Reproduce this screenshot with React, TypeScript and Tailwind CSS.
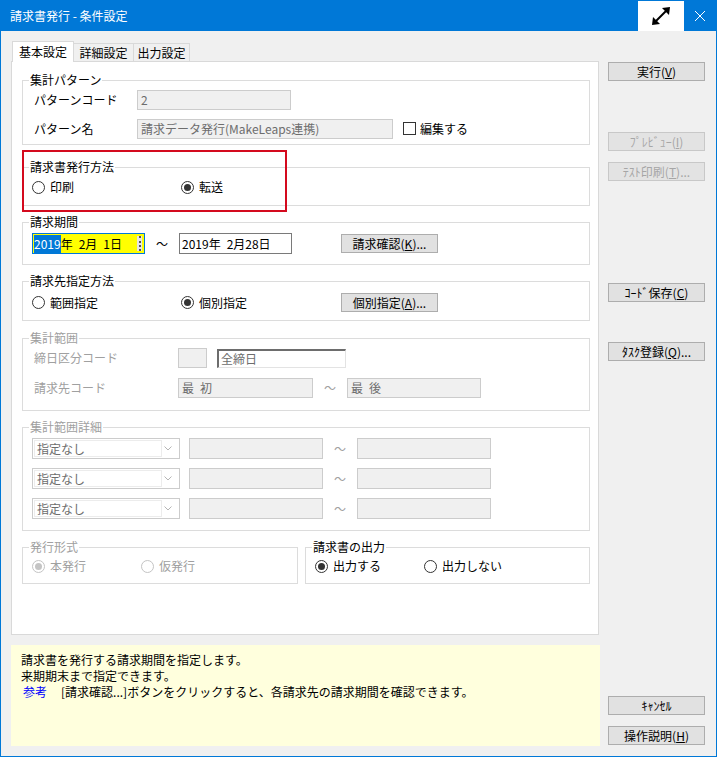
import React from "react";

type BoxProps = { children?: React.ReactNode; className?: string };

function Group({ label, disabled, className = "", children }: BoxProps & { label: string; disabled?: boolean }) {
  return (
    <div className={`relative border border-[#dcdcdc] ${className}`}>
      <span
        className={`absolute left-[6px] top-[-9px] bg-white px-px leading-[16px] ${
          disabled ? "text-[#a0a0a0]" : "text-black"
        }`}
      >
        {label}
      </span>
      {children}
    </div>
  );
}

function Radio({ label, checked, disabled, className = "" }: { label: string; checked?: boolean; disabled?: boolean; className?: string }) {
  return (
    <div className={`flex items-center gap-[5px] h-[16px] ${className}`}>
      <span
        className={`w-[13px] h-[13px] rounded-full border bg-white flex items-center justify-center ${
          disabled ? "border-[#c4c4c4]" : "border-[#333333]"
        }`}
      >
        {checked && <span className={`w-[7px] h-[7px] rounded-full ${disabled ? "bg-[#c4c4c4]" : "bg-[#333333]"}`} />}
      </span>
      <span className={disabled ? "text-[#a0a0a0]" : "text-black"}>{label}</span>
    </div>
  );
}

function Btn({ children, disabled, className = "" }: BoxProps & { disabled?: boolean }) {
  return (
    <button
      className={`h-[19px] w-[97px] border leading-none flex items-center justify-center shrink-0 ${
        disabled ? "bg-[#e3e3e3] border-[#c8c8c8] text-[#a6a6a6]" : "bg-[#e1e1e1] border-[#adadad] text-black"
      } ${className}`}
    >
      {children}
    </button>
  );
}

function GrayField({ className = "", children }: BoxProps) {
  return (
    <div className={`h-[20px] bg-[#f0f0f0] border border-[#cccccc] text-[#6d6d6d] flex items-center pl-[3px] whitespace-pre ${className}`}>
      {children}
    </div>
  );
}

// half-width blank as drawn by the fixed-pitch font of the original
function Sp() {
  return <span className="inline-block w-[6px]" />;
}

function Tilde({ disabled }: { disabled?: boolean }) {
  return <span className={`w-[34px] text-center ${disabled ? "text-[#a0a0a0]" : "text-black"}`}>～</span>;
}

function SelectNone() {
  return (
    <div className="w-[148px] h-[21px] bg-white border border-[#cccccc] flex items-center p-px">
      <div className="w-[128px] h-full border border-[#ececec] flex items-center pl-[2px] text-[#6d6d6d]">指定なし</div>
      <svg className="ml-auto mr-[6px]" width="8" height="5" viewBox="0 0 8 5">
        <polyline points="0.5,0.5 4,4 7.5,0.5" fill="none" stroke="#b5b5b5" strokeWidth="1" />
      </svg>
    </div>
  );
}

export default function App() {
  return (
    <div className="w-[717px] h-[757px] bg-[#f0f0f0] border border-[#0078d7] flex flex-col overflow-hidden text-[12px] text-black font-['Noto_Sans_CJK_JP',sans-serif]">
      {/* title bar */}
      <div className="h-[30px] shrink-0 bg-[#0078d7] flex text-white">
        <div className="flex-1 flex items-center pl-[9px]">請求書発行 - 条件設定</div>
        <div className="w-[46px] bg-white flex items-center justify-center">
          <svg width="24" height="24" viewBox="0 0 24 24">
            <line x1="6" y1="18" x2="18" y2="6" stroke="#000" strokeWidth="2" />
            <polygon points="21,3 13,4 20,11" fill="#000" />
            <polygon points="3,21 4,13 11,20" fill="#000" />
          </svg>
        </div>
        <div className="w-[32px] flex items-center justify-center">
          <svg width="10" height="10" viewBox="0 0 10 10">
            <path d="M0 0 L10 10 M10 0 L0 10" stroke="#fff" strokeWidth="1" />
          </svg>
        </div>
      </div>

      <div className="flex flex-1">
        {/* left column */}
        <div className="w-[599px] pl-[10px] pt-[10px] flex flex-col">
          <div className="h-[20px] flex items-end pl-px">
            <div className="relative z-10 -mb-px h-[21px] w-[62px] bg-white border border-b-0 border-[#d9d9d9] flex items-center justify-center">
              基本設定
            </div>
            <div className="h-[18px] w-[60px] bg-[#f0f0f0] border border-l-0 border-b-0 border-[#d9d9d9] flex items-center justify-center">
              詳細設定
            </div>
            <div className="h-[18px] w-[56px] bg-[#f0f0f0] border border-l-0 border-b-0 border-[#d9d9d9] flex items-center justify-center">
              出力設定
            </div>
          </div>

          <div className="w-[588px] h-[574px] bg-white border border-[#d9d9d9] flex flex-col pl-[10px]">
            {/* 集計パターン */}
            <Group label="集計パターン" className="mt-[18px] w-[568px] h-[65px] pt-[9px] pl-[11px]">
              <div className="flex items-center h-[20px]">
                <span className="w-[103px]">パターンコード</span>
                <GrayField className="w-[154px]">2</GrayField>
              </div>
              <div className="flex items-center h-[19px] mt-[9px]">
                <span className="w-[103px]">パターン名</span>
                <GrayField className="w-[256px] h-[19px]">請求データ発行(MakeLeaps連携)</GrayField>
                <span className="ml-[10px] w-[13px] h-[13px] border border-[#333333] bg-white" />
                <span className="ml-[4px]">編集する</span>
              </div>
            </Group>

            {/* 請求書発行方法 */}
            <Group label="請求書発行方法" className="mt-[22px] w-[568px] h-[39px] pt-[11px] pl-[9px]">
              <div className="flex">
                <Radio label="印刷" className="w-[149px]" />
                <Radio label="転送" checked />
              </div>
              <div className="absolute -left-px -top-[18px] w-[265px] h-[62px] border-2 border-[#d40a1e] pointer-events-none" />
            </Group>

            {/* 請求期間 */}
            <Group label="請求期間" className="mt-[16px] w-[568px] h-[43px] pt-[10px] pl-[9px]">
              <div className="flex items-center h-[21px]">
                <div className="w-[113px] h-[21px] border border-[#0078d7] bg-[#ffff00] flex items-center pl-px whitespace-pre">
                  <span className="bg-[#0078d7] text-white">2019</span>
                  <span>年</span>
                  <Sp />
                  <span>2月</span>
                  <Sp />
                  <span>1日</span>
                  <span className="ml-auto mr-[2px] w-[5px] h-[15px] bg-[#e6e6e6] flex justify-center">
                    <span className="h-full border-l-2 border-dotted border-[#555555]" />
                  </span>
                </div>
                <Tilde />
                <div className="w-[113px] h-[21px] border border-[#7a7a7a] bg-white flex items-center pl-[2px] whitespace-pre">
                  <span>2019年</span>
                  <Sp />
                  <span>2月28日</span>
                </div>
                <Btn className="ml-[49px]">
                  請求確認(<u>K</u>)...
                </Btn>
              </div>
            </Group>

            {/* 請求先指定方法 */}
            <Group label="請求先指定方法" className="mt-[16px] w-[568px] h-[40px] pt-[11px] pl-[9px]">
              <div className="flex items-center h-[19px]">
                <Radio label="範囲指定" className="w-[149px]" />
                <Radio label="個別指定" checked className="w-[160px]" />
                <Btn>
                  個別指定(<u>A</u>)...
                </Btn>
              </div>
            </Group>

            {/* 集計範囲 */}
            <Group label="集計範囲" disabled className="mt-[17px] w-[568px] h-[73px] pt-[9px] pl-[11px]">
              <div className="flex items-center h-[20px] text-[#a0a0a0]">
                <span className="w-[144px]">締日区分コード</span>
                <div className="w-[29px] h-[20px] bg-[#f0f0f0] border border-[#cccccc]" />
                <div className="ml-[10px] w-[129px] h-[19px] bg-white border-t-2 border-l-2 border-r border-b border-t-[#6d6d6d] border-l-[#6d6d6d] border-r-[#e3e3e3] border-b-[#e3e3e3] flex items-center pl-[2px] text-[#6d6d6d]">
                  全締日
                </div>
              </div>
              <div className="flex items-center h-[20px] mt-[10px] text-[#a0a0a0]">
                <span className="w-[144px]">請求先コード</span>
                <GrayField className="w-[135px]">
                  最<Sp />初
                </GrayField>
                <Tilde disabled />
                <GrayField className="w-[134px]">
                  最<Sp />後
                </GrayField>
              </div>
            </Group>

            {/* 集計範囲詳細 */}
            <Group label="集計範囲詳細" disabled className="mt-[16px] w-[568px] h-[104px] pt-[10px] pl-[9px]">
              <div className="flex flex-col gap-[9px]">
                {[0, 1, 2].map((i) => (
                  <div key={i} className="flex items-center h-[21px]">
                    <SelectNone />
                    <GrayField className="ml-[9px] w-[134px] h-[21px]" />
                    <Tilde disabled />
                    <GrayField className="w-[134px] h-[21px]" />
                  </div>
                ))}
              </div>
            </Group>

            {/* 発行形式 / 請求書の出力 */}
            <div className="mt-[16px] flex">
              <Group label="発行形式" disabled className="w-[276px] h-[37px] pt-[10px] pl-[9px]">
                <div className="flex">
                  <Radio label="本発行" checked disabled className="w-[109px]" />
                  <Radio label="仮発行" disabled />
                </div>
              </Group>
              <Group label="請求書の出力" className="ml-[7px] w-[285px] h-[37px] pt-[10px] pl-[9px]">
                <div className="flex">
                  <Radio label="出力する" checked className="w-[109px]" />
                  <Radio label="出力しない" />
                </div>
              </Group>
            </div>
          </div>

          {/* help */}
          <div className="mt-[10px] w-[589px] h-[101px] bg-[#ffffdd] pl-[10px] pt-[7px] leading-[16px]">
            <div>請求書を発行する請求期間を指定します。</div>
            <div>来期期末まで指定できます。</div>
            <div className="flex">
              <span className="ml-[2px] text-[#0000ff]">参考</span>
              <span className="ml-[14px]">[請求確認...]ボタンをクリックすると、各請求先の請求期間を確認できます。</span>
            </div>
          </div>
        </div>

        {/* right column */}
        <div className="flex flex-col pl-[8px] pt-[31px] pb-[11px]">
          <Btn>
            実行(<u>V</u>)
          </Btn>
          <Btn disabled className="mt-[51px]">
            ﾌﾟﾚﾋﾞｭｰ(<u>I</u>)
          </Btn>
          <Btn disabled className="mt-[11px]">
            ﾃｽﾄ印刷(<u>T</u>)...
          </Btn>
          <Btn className="mt-[102px]">
            ｺｰﾄﾞ保存(<u>C</u>)
          </Btn>
          <Btn className="mt-[40px]">
            ﾀｽｸ登録(<u>Q</u>)...
          </Btn>
          <Btn className="mt-auto">ｷｬﾝｾﾙ</Btn>
          <Btn className="mt-[11px]">
            操作説明(<u>H</u>)
          </Btn>
        </div>
      </div>
    </div>
  );
}
